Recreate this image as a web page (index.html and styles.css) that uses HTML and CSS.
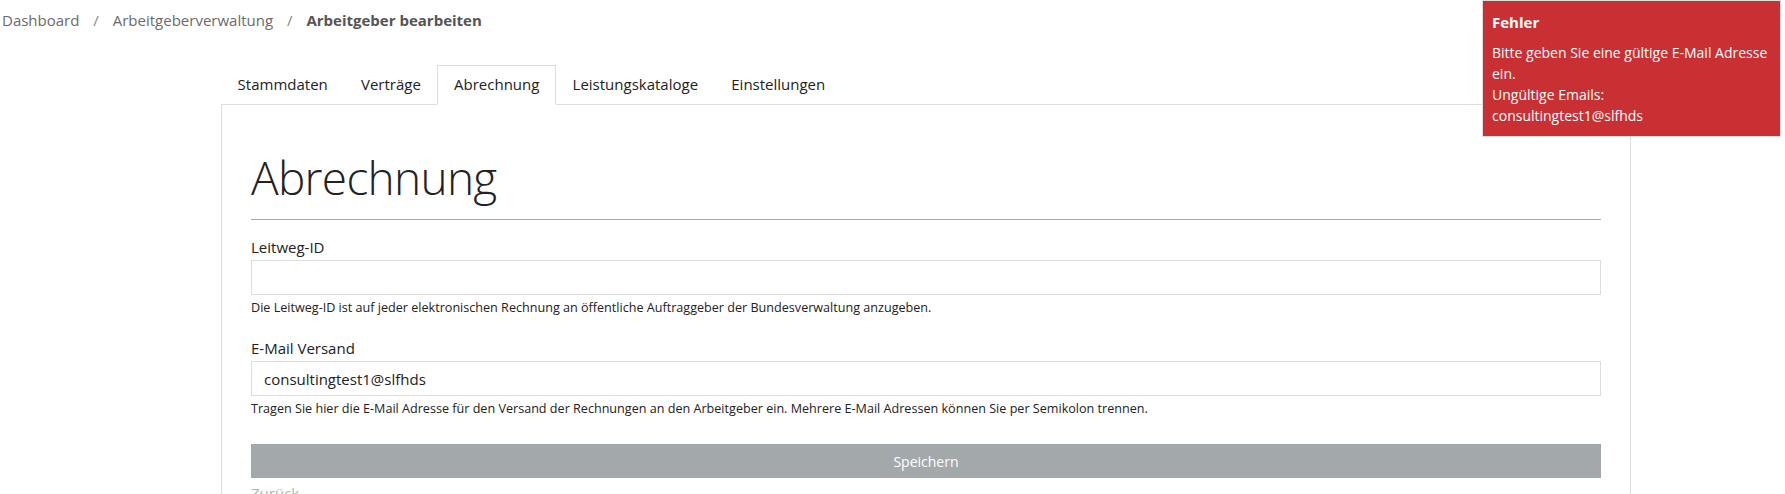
FILE: index.html
```html
<!DOCTYPE html>
<html lang="de">
<head>
    <meta charset="UTF-8">
    <meta name="viewport" content="width=device-width, initial-scale=1.0">
    <title>Arbeitgeber bearbeiten</title>
    <link rel="stylesheet" href="styles.css">
</head>
<body>
    <nav class="breadcrumb">
        <a href="#">Dashboard</a>
        <span class="sep">/</span>
        <a href="#">Arbeitgeberverwaltung</a>
        <span class="sep">/</span>
        <strong>Arbeitgeber bearbeiten</strong>
    </nav>

    <div class="toast">
        <div class="toastTitle">Fehler</div>
        <div class="toastBody">
            Bitte geben Sie eine gültige E-Mail Adresse ein.<br>
            Ungültige Emails:<br>
            consultingtest1@slfhds
        </div>
    </div>

    <main class="editor">
        <ul class="tabs">
            <li class="tab">Stammdaten</li>
            <li class="tab">Verträge</li>
            <li class="tab active">Abrechnung</li>
            <li class="tab">Leistungskataloge</li>
            <li class="tab">Einstellungen</li>
        </ul>

        <section class="panel">
            <h1>Abrechnung</h1>

            <div class="field">
                <label for="leitwegId">Leitweg-ID</label>
                <input type="text" id="leitwegId">
                <p class="help">Die Leitweg-ID ist auf jeder elektronischen Rechnung an öffentliche Auftraggeber der Bundesverwaltung anzugeben.</p>
            </div>

            <div class="field">
                <label for="emailVersand">E-Mail Versand</label>
                <input type="text" id="emailVersand" value="consultingtest1@slfhds">
                <p class="help">Tragen Sie hier die E-Mail Adresse für den Versand der Rechnungen an den Arbeitgeber ein. Mehrere E-Mail Adressen können Sie per Semikolon trennen.</p>
            </div>

            <button class="saveButton">Speichern</button>
            <a class="backLink" href="#">Zurück</a>
        </section>
    </main>
</body>
</html>
```

FILE: styles.css
```css
body {
    margin: 0;
    font-family: "Open Sans", "Noto Sans", sans-serif;
    color: #222;
    background: #fff;
}
.breadcrumb {
    padding: 8px 2px 0;
    font-size: 15px;
    line-height: 24px;
    color: #6b6b6b;
}
.breadcrumb a {
    color: #6b6b6b;
    text-decoration: none;
}
.breadcrumb .sep {
    margin: 0 10px;
    color: #888;
}
.breadcrumb strong {
    color: #555;
    font-weight: 700;
}
.toast {
    position: absolute;
    top: 0;
    right: 4px;
    width: 281px;
    padding: 10px 7px 10px 9px;
    background: #c93033;
    border: 1px solid #ddd;
    color: #fff;
}
.toastTitle {
    font-size: 15px;
    font-weight: 700;
    line-height: 22px;
}
.toastBody {
    margin-top: 9px;
    font-size: 14px;
    line-height: 21px;
}
.editor {
    margin: 33px 0 0 221px;
    width: 1410px;
}
.tabs {
    display: flex;
    margin: 0;
    padding: 0;
    list-style: none;
    border-bottom: 1px solid #ddd;
}
.tab {
    padding: 7px 15.6px 9px;
    margin-bottom: -1px;
    border: 1px solid transparent;
    font-size: 15px;
    line-height: 22px;
    color: #222;
}
.tab.active {
    background: #fff;
    border-color: #ddd #ddd #fff;
}
.panel {
    padding: 46px 29px 0;
    border-left: 1px solid #ddd;
    border-right: 1px solid #ddd;
    height: 400px;
}
h1 {
    margin: 0 0 16px;
    padding-bottom: 15px;
    border-bottom: 1px solid #a4c23c;
    font-size: 46px;
    font-weight: 300;
    letter-spacing: -0.7px;
    line-height: 53px;
    color: #222;
}
.field {
    margin-bottom: 20px;
}
label {
    display: block;
    font-size: 15px;
    line-height: 22px;
    margin-bottom: 2px;
}
input {
    display: block;
    box-sizing: border-box;
    width: 100%;
    height: 35px;
    padding: 0 12px;
    border: 1px solid #ddd;
    font-family: inherit;
    font-size: 15px;
    color: #222;
}
.help {
    margin: 4px 0 0;
    font-size: 12.6px;
    line-height: 18px;
    color: #222;
}
.saveButton {
    display: block;
    width: 100%;
    height: 34px;
    margin-top: 26px;
    border: none;
    background: #a3a9ab;
    color: #fff;
    font-family: inherit;
    font-size: 14px;
}
.backLink {
    display: block;
    margin-top: 4px;
    font-size: 15px;
    line-height: 22px;
    color: #b3b3b3;
    text-decoration: none;
}
```
